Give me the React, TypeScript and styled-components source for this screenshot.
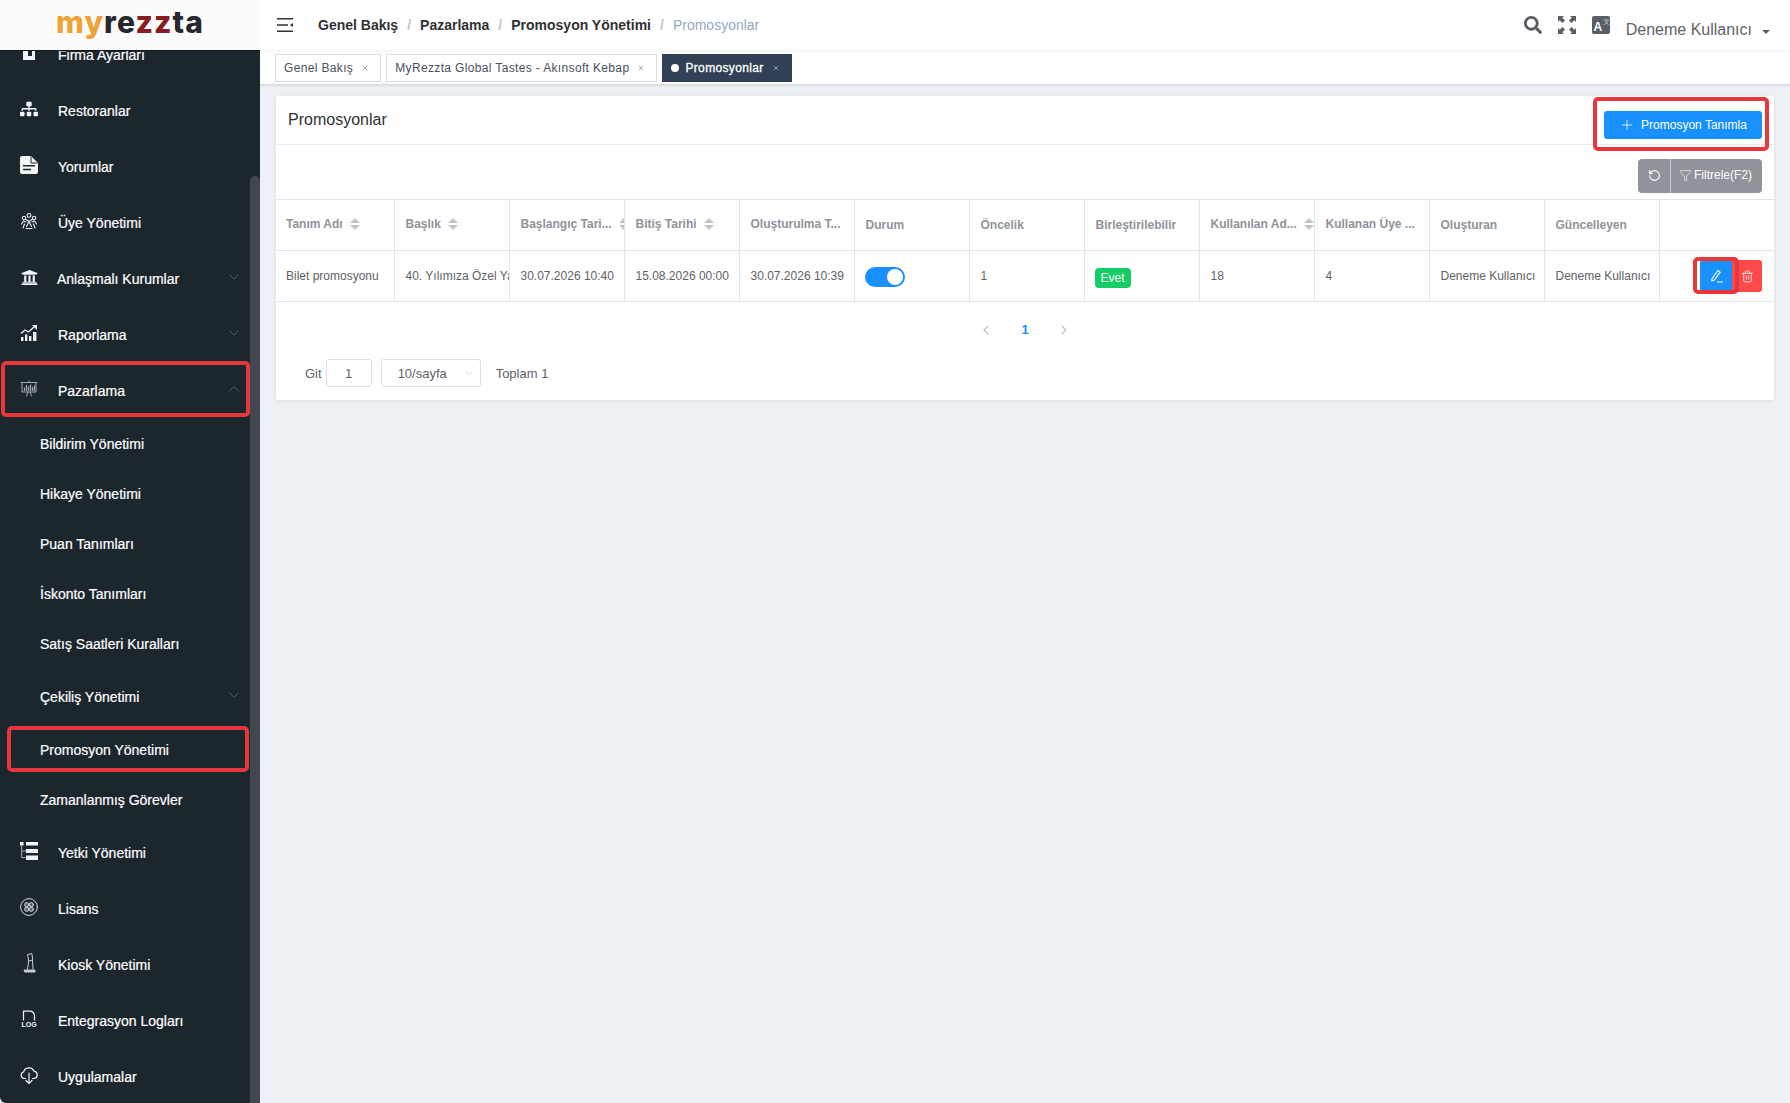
import styled, { createGlobalStyle } from "styled-components";
import { ChevronDown, ChevronLeft, ChevronRight, ChevronUp, Filter, Plus, RotateCcw, Trash2, X } from "lucide-react";
import { FaSearch, FaSitemap, FaUniversity } from "react-icons/fa";
import type { ReactNode } from "react";

const GlobalStyle = createGlobalStyle`
    html, body {
        margin: 0;
        height: 100%;
        overflow: hidden;
        font-family: "Liberation Sans", Arial, sans-serif;
    }
    * { box-sizing: border-box; }
`

const Page = styled.div`
    display: flex;
    height: 1103px;
    background-color: #edf0f5;
`

const Sidebar = styled.aside`
    position: relative;
    width: 260px;
    flex-shrink: 0;
    display: flex;
    flex-direction: column;
    background-color: #1c262d;
    border-bottom-left-radius: 6px;
    overflow: hidden;
`

const LogoBar = styled.div`
    position: relative;
    z-index: 2;
    height: 51px;
    flex-shrink: 0;
    display: flex;
    align-items: center;
    justify-content: center;
    background-color: #fbfbfb;
    border-bottom: 1px solid #10161a;
`

const Logo = styled.div`
    font-family: "Inter", sans-serif;
    font-weight: 800;
    font-size: 30px;
    letter-spacing: 1.1px;
    line-height: 1;
    color: #26282b;
    margin-top: -6px;
`

const LogoPart = styled.span<{ $color: string }>`
    color: ${p => p.$color};
`

const NavList = styled.nav`
    width: 250px;
    margin-top: -24px;
`

const NavRow = styled.div<{ $sub?: boolean; $tall?: boolean }>`
    position: relative;
    display: flex;
    align-items: center;
    height: ${p => (p.$sub && !p.$tall ? 50 : 56)}px;
    padding-left: ${p => (p.$sub ? 40 : 20)}px;
    color: #fff;
    font-size: 14px;
    -webkit-text-stroke: 0.2px #fff;
`

const NavIcon = styled.span<{ $tight?: boolean }>`
    width: 18px;
    height: 18px;
    margin-right: ${p => (p.$tight ? 19 : 20)}px;
    margin-top: -4px;
    display: flex;
    align-items: center;
    justify-content: center;
    color: #f2f4f5;
    flex-shrink: 0;
`

const NavLabel = styled.span`
    flex-grow: 1;
`

const NavChevron = styled.span`
    display: flex;
    margin-right: 7px;
    margin-top: -4px;
    color: #66717a;
`

const RedFrame = styled.span`
    position: absolute;
    border: 4px solid #e9363b;
    border-radius: 5px;
    pointer-events: none;
`

const NavFrameWide = styled(RedFrame)`
    left: 1px;
    right: 0;
    top: -2px;
    bottom: 2px;
`

const NavFrameSub = styled(RedFrame)`
    left: 7px;
    right: 1px;
    top: 1px;
    bottom: 3px;
`

const ScrollThumb = styled.div`
    position: absolute;
    right: 0;
    top: 176px;
    bottom: 0;
    width: 10px;
    background-color: #40474f;
    border-top-left-radius: 5px;
    border-top-right-radius: 5px;
`

const Main = styled.main`
    flex-grow: 1;
    min-width: 0;
`

const TopBar = styled.header`
    height: 50px;
    display: flex;
    align-items: center;
    background-color: #fff;
    padding-left: 17px;
    box-shadow: 0 1px 3px rgba(0, 21, 41, 0.06);
    position: relative;
`

const Crumbs = styled.div`
    display: flex;
    align-items: center;
    margin-left: 25px;
    flex-grow: 1;
    font-size: 14px;
    font-weight: bold;
    color: #303133;
`

const CrumbSep = styled.span`
    margin: 0 9px;
    font-weight: bold;
    color: #c0c4cc;
`

const CrumbLast = styled.span`
    font-weight: normal;
    color: #97a8be;
`

const ToolIcons = styled.div`
    display: flex;
    align-items: center;
    gap: 16px;
    color: #5a5e66;
`

const UserName = styled.div`
    display: flex;
    align-items: center;
    margin: 10px 0 0 16px;
    padding-right: 20px;
    font-size: 16px;
    color: #606266;
`

const UserCaret = styled.span`
    width: 0;
    height: 0;
    margin-left: 10px;
    margin-top: 3px;
    border-left: 4px solid transparent;
    border-right: 4px solid transparent;
    border-top: 4px solid #5a5e66;
`

const TagsBar = styled.div`
    height: 34px;
    display: flex;
    gap: 5px;
    padding: 4px 0 0 15px;
    background-color: #fff;
    box-shadow: 0 1px 3px rgba(0, 0, 0, 0.12), 0 0 3px rgba(0, 0, 0, 0.04);
`

const Tag = styled.div<{ $active?: boolean }>`
    height: 28px;
    display: flex;
    align-items: center;
    padding: 0 11px 0 8px;
    font-size: 12px;
    letter-spacing: 0.35px;
    border: 1px solid ${p => (p.$active ? "#304156" : "#d8dce5")};
    background-color: ${p => (p.$active ? "#304156" : "#fff")};
    color: ${p => (p.$active ? "#fff" : "#495060")};
    -webkit-text-stroke: ${p => (p.$active ? "0.3px #fff" : "0")};
`

const TagDot = styled.span`
    width: 8px;
    height: 8px;
    border-radius: 50%;
    background-color: #fff;
    margin-right: 6px;
`

const TagClose = styled.span`
    display: flex;
    margin-left: 8px;
    opacity: 0.7;
`

const Card = styled.section`
    margin: 12px 16px 0;
    height: 304px;
    background-color: #fff;
    box-shadow: 0 1px 4px rgba(0, 0, 0, 0.08);
    border-radius: 2px;
`

const CardHeader = styled.div`
    position: relative;
    height: 49px;
    display: flex;
    align-items: center;
    justify-content: space-between;
    padding: 0 12px;
    border-bottom: 1px solid #e6ebf5;
`

const CardTitle = styled.h2`
    margin: 0;
    font-size: 16px;
    font-weight: normal;
    color: #303133;
`

const PrimaryButton = styled.button`
    height: 28px;
    width: 158px;
    margin-top: 10px;
    display: flex;
    align-items: center;
    justify-content: center;
    gap: 6px;
    border: none;
    border-radius: 3px;
    background-color: #1890ff;
    color: #fff;
    font: 12px "Liberation Sans", Arial, sans-serif;
`

const HeaderFrame = styled(RedFrame)`
    right: 5px;
    top: 1px;
    width: 176px;
    height: 54px;
`

const Toolbar = styled.div`
    height: 54px;
    display: flex;
    justify-content: flex-end;
    align-items: flex-start;
    padding: 14px 12px 0 0;
`

const FilterGroup = styled.div`
    display: flex;
    height: 34px;
    padding-bottom: 2px;
    border-radius: 4px;
    overflow: hidden;
    background-color: #909399;
    color: #fff;
    font-size: 12px;
`

const ResetPart = styled.div`
    display: flex;
    align-items: center;
    padding: 0 9px 0 10px;
`

const FilterPart = styled.div`
    display: flex;
    align-items: center;
    gap: 2px;
    margin-bottom: -2px;
    padding: 0 10px 2px 8px;
    border-left: 1px solid #c4c6ca;
`

const Table = styled.table`
    width: 1498px;
    table-layout: fixed;
    border-collapse: collapse;
    font-size: 12px;
    color: #606266;
`

const HeadCell = styled.th`
    height: 51px;
    padding: 0 0 0 11px;
    text-align: left;
    font-weight: bold;
    color: #909399;
    border: 1px solid #dfe6ec;
    border-left-width: 0;
    width: 115px;
    overflow: hidden;
    &:first-child { width: 118px; padding-left: 10px; }
    &:last-child { border-right: none; }
`

const HeadInner = styled.div<{ $plain?: boolean }>`
    display: flex;
    align-items: center;
    white-space: nowrap;
    margin-top: ${p => (p.$plain ? 0 : -2)}px;
`

const SortCarets = styled.span`
    display: inline-flex;
    flex-direction: column;
    gap: 2px;
    margin-left: 7px;
    flex-shrink: 0;
`

const Caret = styled.i<{ $down?: boolean }>`
    width: 0;
    height: 0;
    border-left: 5px solid transparent;
    border-right: 5px solid transparent;
    ${p => (p.$down ? "border-top: 5px solid #c0c4cc;" : "border-bottom: 5px solid #c0c4cc;")}
`

const BodyCell = styled.td`
    height: 51px;
    padding: 0 0 0 11px;
    border: 1px solid #dfe6ec;
    border-left-width: 0;
    white-space: nowrap;
    overflow: hidden;
    &:first-child { padding-left: 10px; }
    &:last-child { border-right: none; }
`

const ActionCell = styled(BodyCell)`
    position: relative;
    overflow: visible;
`

const Switch = styled.span`
    display: block;
    position: relative;
    width: 40px;
    height: 20px;
    margin: 2px 0 0 -1px;
    border-radius: 10px;
    background-color: #1890ff;
    &::after {
        content: "";
        position: absolute;
        right: 2px;
        top: 2px;
        width: 16px;
        height: 16px;
        border-radius: 50%;
        background-color: #fff;
    }
`

const YesBadge = styled.span`
    display: block;
    width: fit-content;
    height: 20px;
    line-height: 20px;
    padding: 0 6px;
    margin: 4px 0 0 -1px;
    border-radius: 4px;
    background-color: #13ce66;
    color: #fff;
`

const ActionButtons = styled.div`
    display: flex;
    justify-content: flex-end;
    padding-right: 12px;
`

const ActionButton = styled.button<{ $color: string }>`
    width: ${p => (p.$color === "#1890ff" ? 32 : 30)}px;
    height: 32px;
    padding: 0;
    display: flex;
    align-items: center;
    justify-content: center;
    border: none;
    border-radius: ${p => (p.$color === "#1890ff" ? "3px 0 0 3px" : "0 3px 3px 0")};
    background-color: ${p => p.$color};
    color: #fff;
`

const ActionFrame = styled(RedFrame)`
    right: 35px;
    top: 6px;
    width: 46px;
    height: 37px;
`

const Pager = styled.div`
    height: 57px;
    display: flex;
    align-items: center;
    justify-content: center;
    gap: 26px;
    padding-bottom: 2px;
    color: #c0c4cc;
`

const PageNumber = styled.span`
    width: 10px;
    text-align: center;
    font-size: 13px;
    font-weight: bold;
    color: #1890ff;
`

const PagerBottom = styled.div`
    display: flex;
    align-items: center;
    padding-left: 29px;
    font-size: 13px;
    color: #606266;
`

const JumpInput = styled.div`
    width: 46px;
    height: 28px;
    margin-left: 4px;
    display: flex;
    align-items: center;
    justify-content: center;
    border: 1px solid #dcdfe6;
    border-radius: 3px;
`

const SizeSelect = styled.div`
    width: 100px;
    height: 28px;
    margin: 0 15px 0 9px;
    padding: 0 5px 0 16px;
    display: flex;
    align-items: center;
    justify-content: space-between;
    border: 1px solid #dcdfe6;
    border-radius: 3px;
    color: #606266;
`

const SelectChevron = styled.span`
    display: flex;
    color: #c0c4cc;
`

const svgProps = { fill: "none", stroke: "currentColor", strokeLinecap: "round", strokeLinejoin: "round" } as const

const BuildingIcon = () => (
    <svg width="18" height="18" viewBox="0 0 18 18" fill="currentColor">
        <path d="M3 0h12v16H3zM8 3v9h4V3z" fillRule="evenodd" />
    </svg>
)

const DocumentIcon = () => (
    <svg width="18" height="18" viewBox="0 0 18 18">
        <path d="M2 0h9l7 7v9a2 2 0 0 1-2 2H2a2 2 0 0 1-2-2V2a2 2 0 0 1 2-2z" fill="currentColor" />
        <path d="M11 .5V7h6.500" fill="none" stroke="#1c262d" strokeWidth="1" />
        <path d="M3 9.800h12M3 13.500h8" fill="none" stroke="#1c262d" strokeWidth="1.600" />
    </svg>
)

const MembersIcon = () => (
    <svg width="18" height="18" viewBox="0 0 18 18" {...svgProps} strokeWidth="1.100">
        <circle cx="9" cy="3.400" r="1.900" />
        <circle cx="4" cy="6" r="1.700" />
        <circle cx="14" cy="6" r="1.700" />
        <path d="M6 7.500l3 2 3-2M9 9.500l-2.500 5M9 9.500l2.500 5M1.500 12l2-3 2.500 1M16.500 12l-2-3-2.500 1M3 16l1.500-4M15 16l-1.500-4M6 16.500h6" />
    </svg>
)

const GrowthIcon = () => (
    <svg width="18" height="18" viewBox="0 0 18 18" fill="currentColor">
        <path d="M1 13h2.400v4H1zM5 10.500h2.400V17H5zM9 12h2.400v5H9zM13 8h3.400v9H13z" />
        <path d="M1 9.500l4-3.500 3.500 2L14 3" fill="none" stroke="currentColor" strokeWidth="1.400" />
        <path d="M12 1h5v5z" />
    </svg>
)

const MarketingIcon = () => (
    <svg width="18" height="18" viewBox="0 0 18 18" {...svgProps} strokeWidth="1" color="#a3a9ad">
        <path d="M1 2.500h16M2 2.500v9.500h14V2.500M9 1v1.500M6.500 16l1.500-4M11.500 16l-1.500-4" />
        <path d="M4.500 10.500V8M6.500 10.500V5.500M8.500 10.500V7M10.500 10.500V5M12.500 10.500V7.500M14.500 10.500V6" strokeWidth="1.300" />
    </svg>
)

const PermissionIcon = () => (
    <svg width="18" height="18" viewBox="0 0 18 18" fill="currentColor">
        <path d="M0 0h3.500v3.500H0zM6 0h12v3.500H6zM6 7h12v4H6zM6 13.500h12V18H6z" />
        <path d="M1.700 3.500V15.700H6M1.700 9H6" fill="none" stroke="#a8adb1" strokeWidth="1" />
    </svg>
)

const LicenseIcon = () => (
    <svg width="18" height="18" viewBox="0 0 18 18" {...svgProps} strokeWidth="1" color="#d3d6d8">
        <circle cx="9" cy="9" r="8.400" />
        <g fill="currentColor" fillOpacity="0.35">
            <circle cx="6.700" cy="6.700" r="2.100" />
            <circle cx="11.300" cy="6.700" r="2.100" />
            <circle cx="6.700" cy="11.300" r="2.100" />
            <circle cx="11.300" cy="11.300" r="2.100" />
        </g>
    </svg>
)

const KioskIcon = () => (
    <svg width="13" height="20" viewBox="0 0 13 20" {...svgProps} strokeWidth="1" color="#c8cccf">
        <path d="M5 1.500l3.800-1 1 6.500-3.800 1zM5.800 8L4.500 16M9.500 7l.5 9" />
        <path d="M1.500 17h10.500v2H2z" fill="currentColor" />
    </svg>
)

const LogIcon = () => (
    <svg width="18" height="18" viewBox="0 0 18 18" {...svgProps} strokeWidth="1.200">
        <path d="M3.500 10V1.200h6.500a4.500 4.500 0 0 1 4.500 4.500V10" />
        <text x="9" y="17" textAnchor="middle" fontFamily="Liberation Sans" fontWeight="bold" fontSize="7" fill="currentColor" stroke="none">LOG</text>
    </svg>
)

const CloudIcon = () => (
    <svg width="18" height="18" viewBox="0 0 18 18" {...svgProps} strokeWidth="1.200">
        <path d="M5.500 12.500H4.200a3.300 3.300 0 0 1-.6-6.500A5.500 5.500 0 0 1 14 5.200a3.700 3.700 0 0 1 .2 7.300h-1.700" />
        <path d="M9 7v10.500M6 14.500l3 3 3-3" />
    </svg>
)

const FullscreenIcon = () => (
    <svg width="18" height="18" viewBox="0 0 18 18" fill="currentColor">
        <path d="M0 0h6L4.300 1.700 7 4.400 4.400 7 1.700 4.300 0 6zM18 0v6l-1.700-1.700L13.600 7 11 4.400l2.700-2.700L12 0zM0 18v-6l1.700 1.700L4.400 11 7 13.600l-2.700 2.700L6 18zM18 18h-6l1.700-1.700L11 13.600 13.600 11l2.700 2.700L18 12z" />
    </svg>
)

const TranslateIcon = () => (
    <svg width="18" height="18" viewBox="0 0 18 18">
        <rect width="18" height="18" rx="2" fill="currentColor" />
        <text x="1.500" y="15" fontFamily="Liberation Sans" fontWeight="bold" fontSize="12" fill="#fff">A</text>
        <text x="10.500" y="8" fontFamily="Liberation Sans" fontSize="7" fill="#d5d7da">文</text>
    </svg>
)

const MenuFoldIcon = () => (
    <svg width="16" height="14" viewBox="0 0 16 14" fill="currentColor" color="#303133">
        <path d="M0 0h16v1.500H0zM0 6.200h11v1.500H0zM0 12.500h16V14H0zM16 5v4l-3-2z" />
    </svg>
)

const EditIcon = () => (
    <svg width="14" height="14" viewBox="0 0 14 14" {...svgProps} strokeWidth="1.100">
        <path d="M3 9.500L9 1.500l2.200 1.600-6 8-2.400.8zM8.500 13h5" />
    </svg>
)

type NavEntry = {
    label: string
    icon?: ReactNode
    tight?: boolean
    chevron?: "up" | "down"
    sub?: boolean
    tall?: boolean
    frame?: ReactNode
}

const navEntries: NavEntry[] = [
    { label: "Firma Ayarları", icon: <BuildingIcon /> },
    { label: "Restoranlar", icon: <FaSitemap size={18} /> },
    { label: "Yorumlar", icon: <DocumentIcon /> },
    { label: "Üye Yönetimi", icon: <MembersIcon /> },
    { label: "Anlaşmalı Kurumlar", icon: <FaUniversity size={17} />, tight: true, chevron: "down" },
    { label: "Raporlama", icon: <GrowthIcon />, chevron: "down" },
    { label: "Pazarlama", icon: <MarketingIcon />, chevron: "up", frame: <NavFrameWide /> },
    { label: "Bildirim Yönetimi", sub: true },
    { label: "Hikaye Yönetimi", sub: true },
    { label: "Puan Tanımları", sub: true },
    { label: "İskonto Tanımları", sub: true },
    { label: "Satış Saatleri Kuralları", sub: true },
    { label: "Çekiliş Yönetimi", sub: true, tall: true, chevron: "down" },
    { label: "Promosyon Yönetimi", sub: true, frame: <NavFrameSub /> },
    { label: "Zamanlanmış Görevler", sub: true },
    { label: "Yetki Yönetimi", icon: <PermissionIcon /> },
    { label: "Lisans", icon: <LicenseIcon /> },
    { label: "Kiosk Yönetimi", icon: <KioskIcon /> },
    { label: "Entegrasyon Logları", icon: <LogIcon /> },
    { label: "Uygulamalar", icon: <CloudIcon /> },
]

const columns: { label: string; raised?: boolean; caret?: boolean }[] = [
    { label: "Tanım Adı", raised: true, caret: true },
    { label: "Başlık", raised: true, caret: true },
    { label: "Başlangıç Tari...", raised: true, caret: true },
    { label: "Bitiş Tarihi", raised: true, caret: true },
    { label: "Oluşturulma T...", raised: true },
    { label: "Durum" },
    { label: "Öncelik" },
    { label: "Birleştirilebilir" },
    { label: "Kullanılan Ad...", raised: true, caret: true },
    { label: "Kullanan Üye ...", raised: true },
    { label: "Oluşturan" },
    { label: "Güncelleyen" },
    { label: "" },
]

export default function App() {
    return <Page>
        <GlobalStyle />
        <Sidebar>
            <LogoBar>
                <Logo>
                    <LogoPart $color="#f0a233">my</LogoPart>re<LogoPart $color="#8a1c26">zz</LogoPart>ta
                </Logo>
            </LogoBar>
            <NavList>
                {navEntries.map(entry => (
                    <NavRow key={entry.label} $sub={entry.sub} $tall={entry.tall}>
                        {entry.icon && <NavIcon $tight={entry.tight}>{entry.icon}</NavIcon>}
                        <NavLabel>{entry.label}</NavLabel>
                        {entry.chevron && (
                            <NavChevron>
                                {entry.chevron === "up"
                                    ? <ChevronUp size={18} strokeWidth={1} />
                                    : <ChevronDown size={18} strokeWidth={1} />}
                            </NavChevron>
                        )}
                        {entry.frame}
                    </NavRow>
                ))}
            </NavList>
            <ScrollThumb />
        </Sidebar>
        <Main>
            <TopBar>
                <MenuFoldIcon />
                <Crumbs>
                    Genel Bakış<CrumbSep>/</CrumbSep>
                    Pazarlama<CrumbSep>/</CrumbSep>
                    Promosyon Yönetimi<CrumbSep>/</CrumbSep>
                    <CrumbLast>Promosyonlar</CrumbLast>
                </Crumbs>
                <ToolIcons>
                    <FaSearch size={18} />
                    <FullscreenIcon />
                    <TranslateIcon />
                </ToolIcons>
                <UserName>Deneme Kullanıcı<UserCaret /></UserName>
            </TopBar>
            <TagsBar>
                <Tag>Genel Bakış<TagClose><X size={8} strokeWidth={2} /></TagClose></Tag>
                <Tag>MyRezzta Global Tastes - Akınsoft Kebap<TagClose><X size={8} strokeWidth={2} /></TagClose></Tag>
                <Tag $active><TagDot />Promosyonlar<TagClose><X size={8} strokeWidth={2} /></TagClose></Tag>
            </TagsBar>
            <Card>
                <CardHeader>
                    <CardTitle>Promosyonlar</CardTitle>
                    <PrimaryButton><Plus size={16} strokeWidth={1.2} />Promosyon Tanımla</PrimaryButton>
                    <HeaderFrame />
                </CardHeader>
                <Toolbar>
                    <FilterGroup>
                        <ResetPart><RotateCcw size={13} /></ResetPart>
                        <FilterPart><Filter size={13} strokeWidth={1.2} />Filtrele(F2)</FilterPart>
                    </FilterGroup>
                </Toolbar>
                <Table>
                    <thead>
                        <tr>
                            {columns.map((col, i) => (
                                <HeadCell key={i}>
                                    <HeadInner $plain={!col.raised}>
                                        {col.label}
                                        {col.caret && <SortCarets><Caret /><Caret $down /></SortCarets>}
                                    </HeadInner>
                                </HeadCell>
                            ))}
                        </tr>
                    </thead>
                    <tbody>
                        <tr>
                            <BodyCell>Bilet promosyonu</BodyCell>
                            <BodyCell>40. Yılımıza Özel Yaz Promosyonu</BodyCell>
                            <BodyCell>30.07.2026 10:40</BodyCell>
                            <BodyCell>15.08.2026 00:00</BodyCell>
                            <BodyCell>30.07.2026 10:39</BodyCell>
                            <BodyCell><Switch /></BodyCell>
                            <BodyCell>1</BodyCell>
                            <BodyCell><YesBadge>Evet</YesBadge></BodyCell>
                            <BodyCell>18</BodyCell>
                            <BodyCell>4</BodyCell>
                            <BodyCell>Deneme Kullanıcı</BodyCell>
                            <BodyCell>Deneme Kullanıcı</BodyCell>
                            <ActionCell>
                                <ActionButtons>
                                    <ActionButton $color="#1890ff"><EditIcon /></ActionButton>
                                    <ActionButton $color="#ff4949"><Trash2 size={13} strokeWidth={1.5} /></ActionButton>
                                </ActionButtons>
                                <ActionFrame />
                            </ActionCell>
                        </tr>
                    </tbody>
                </Table>
                <Pager>
                    <ChevronLeft size={16} />
                    <PageNumber>1</PageNumber>
                    <ChevronRight size={16} />
                </Pager>
                <PagerBottom>
                    Git
                    <JumpInput>1</JumpInput>
                    <SizeSelect>
                        10/sayfa
                        <SelectChevron><ChevronDown size={12} strokeWidth={1.3} /></SelectChevron>
                    </SizeSelect>
                    Toplam 1
                </PagerBottom>
            </Card>
        </Main>
    </Page>
}
